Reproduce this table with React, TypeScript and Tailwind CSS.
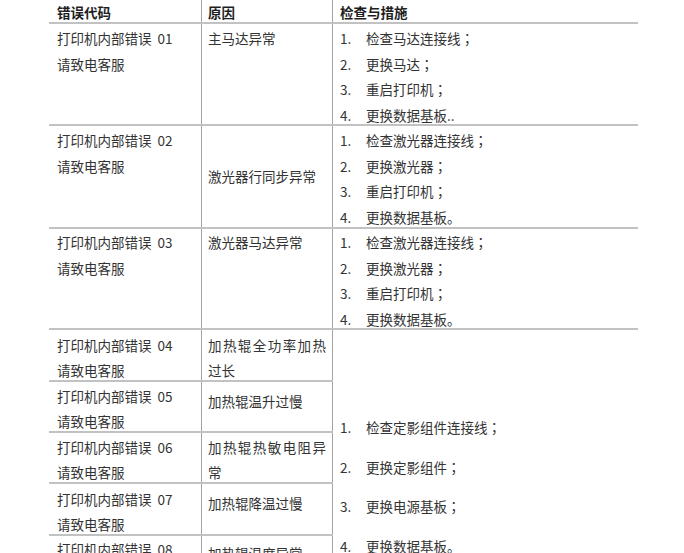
import React from "react";

const H = "border-b-2 border-[#c2c2c2]";
const V = "border-r border-[#a3a3a3]";

function Txt({ t }: { t: string }) {
  if (t.endsWith("；")) {
    return (
      <span>
        {t.slice(0, -1)}
        <span style={{ fontFamily: '"Noto Sans CJK TC", sans-serif' }}>；</span>
      </span>
    );
  }
  return <span>{t}</span>;
}

function Steps({ items }: { items: string[] }) {
  return (
    <div className="flex flex-col leading-[25.5px]">
      {items.map((t, i) => (
        <div key={i} className="flex">
          <span className="w-[26px] shrink-0">{i + 1}.</span>
          <Txt t={t} />
        </div>
      ))}
    </div>
  );
}

function Code({ n }: { n: string }) {
  return (
    <>
      <div>
        打印机内部错误 <span className="ml-[3px]">{n}</span>
      </div>
      <div>请致电客服</div>
    </>
  );
}

type Small = { n: string; cause: string; h: string; pt: string; cpt: string };

const smallRows: Small[] = [
  { n: "04", cause: "加热辊全功率加热过长", h: "h-[52px]", pt: "pt-[3px]", cpt: "pt-[3px]" },
  { n: "05", cause: "加热辊温升过慢", h: "h-[51px]", pt: "pt-[2px]", cpt: "pt-[7px]" },
  { n: "06", cause: "加热辊热敏电阻异常", h: "h-[51px]", pt: "pt-[2px]", cpt: "pt-[2px]" },
  { n: "07", cause: "加热辊降温过慢", h: "h-[52px]", pt: "pt-[3px]", cpt: "pt-[7px]" },
  { n: "08", cause: "加热辊温度异常", h: "h-[52px]", pt: "pt-[1px]", cpt: "pt-[5px]" },
];

export default function App() {
  return (
    <div
      className="w-[684px] h-[553px] overflow-hidden bg-white text-[13.5px] text-[#333333]"
      style={{ fontFamily: '"Noto Sans CJK SC", "Noto Sans", sans-serif' }}
    >
      <div className="ml-[49px] w-[589px] flex flex-col">
        {/* header */}
        <div className={`flex h-[24px] ${H} font-bold text-[#1e1e1e] leading-[20px]`}>
          <div className={`w-[153px] pl-[8px] pt-[2px] ${V}`}>错误代码</div>
          <div className={`w-[131px] pl-[6px] pt-[2px] ${V}`}>原因</div>
          <div className="flex-1 pl-[7px] pt-[2px]">检查与措施</div>
        </div>

        {/* row 1 */}
        <div className={`flex h-[102px] ${H} leading-[25.5px]`}>
          <div className={`w-[153px] pl-[8px] pt-[2px] ${V}`}>
            <Code n="01" />
          </div>
          <div className={`w-[131px] pl-[6px] pt-[2px] ${V}`}>主马达异常</div>
          <div className="flex-1 pl-[7px] pt-[2px]">
            <Steps items={["检查马达连接线；", "更换马达；", "重启打印机；", "更换数据基板.."]} />
          </div>
        </div>

        {/* row 2 */}
        <div className={`flex h-[103px] ${H} leading-[25.5px]`}>
          <div className={`w-[153px] pl-[8px] pt-[2px] ${V}`}>
            <Code n="02" />
          </div>
          <div className={`w-[131px] pl-[6px] flex items-center pt-[1px] ${V}`}>激光器行同步异常</div>
          <div className="flex-1 pl-[7px] pt-[2px]">
            <Steps items={["检查激光器连接线；", "更换激光器；", "重启打印机；", "更换数据基板。"]} />
          </div>
        </div>

        {/* row 3 */}
        <div className={`flex h-[101px] ${H} leading-[25.5px]`}>
          <div className={`w-[153px] pl-[8px] pt-[1px] ${V}`}>
            <Code n="03" />
          </div>
          <div className={`w-[131px] pl-[6px] pt-[1px] ${V}`}>激光器马达异常</div>
          <div className="flex-1 pl-[7px] pt-[1px]">
            <Steps items={["检查激光器连接线；", "更换激光器；", "重启打印机；", "更换数据基板。"]} />
          </div>
        </div>

        {/* rows 4-8 with merged steps */}
        <div className="flex">
          <div className="flex flex-col w-[284px] leading-[25px]">
            {smallRows.map((r) => (
              <div key={r.n} className={`flex shrink-0 ${r.h} ${H}`}>
                <div className={`w-[153px] pl-[8px] ${r.pt} ${V}`}>
                  <Code n={r.n} />
                </div>
                <div className={`w-[131px] pl-[6px] pr-[6px] text-justify ${r.cpt} ${V}`}>{r.cause}</div>
              </div>
            ))}
          </div>
          <div className="flex-1 pl-[7px] pt-[85px]">
            <div className="flex flex-col gap-[14.5px] leading-[25px]">
              {["检查定影组件连接线；", "更换定影组件；", "更换电源基板；", "更换数据基板。"].map((t, i) => (
                <div key={i} className="flex">
                  <span className="w-[26px] shrink-0">{i + 1}.</span>
                  <Txt t={t} />
                </div>
              ))}
            </div>
          </div>
        </div>
      </div>
    </div>
  );
}
